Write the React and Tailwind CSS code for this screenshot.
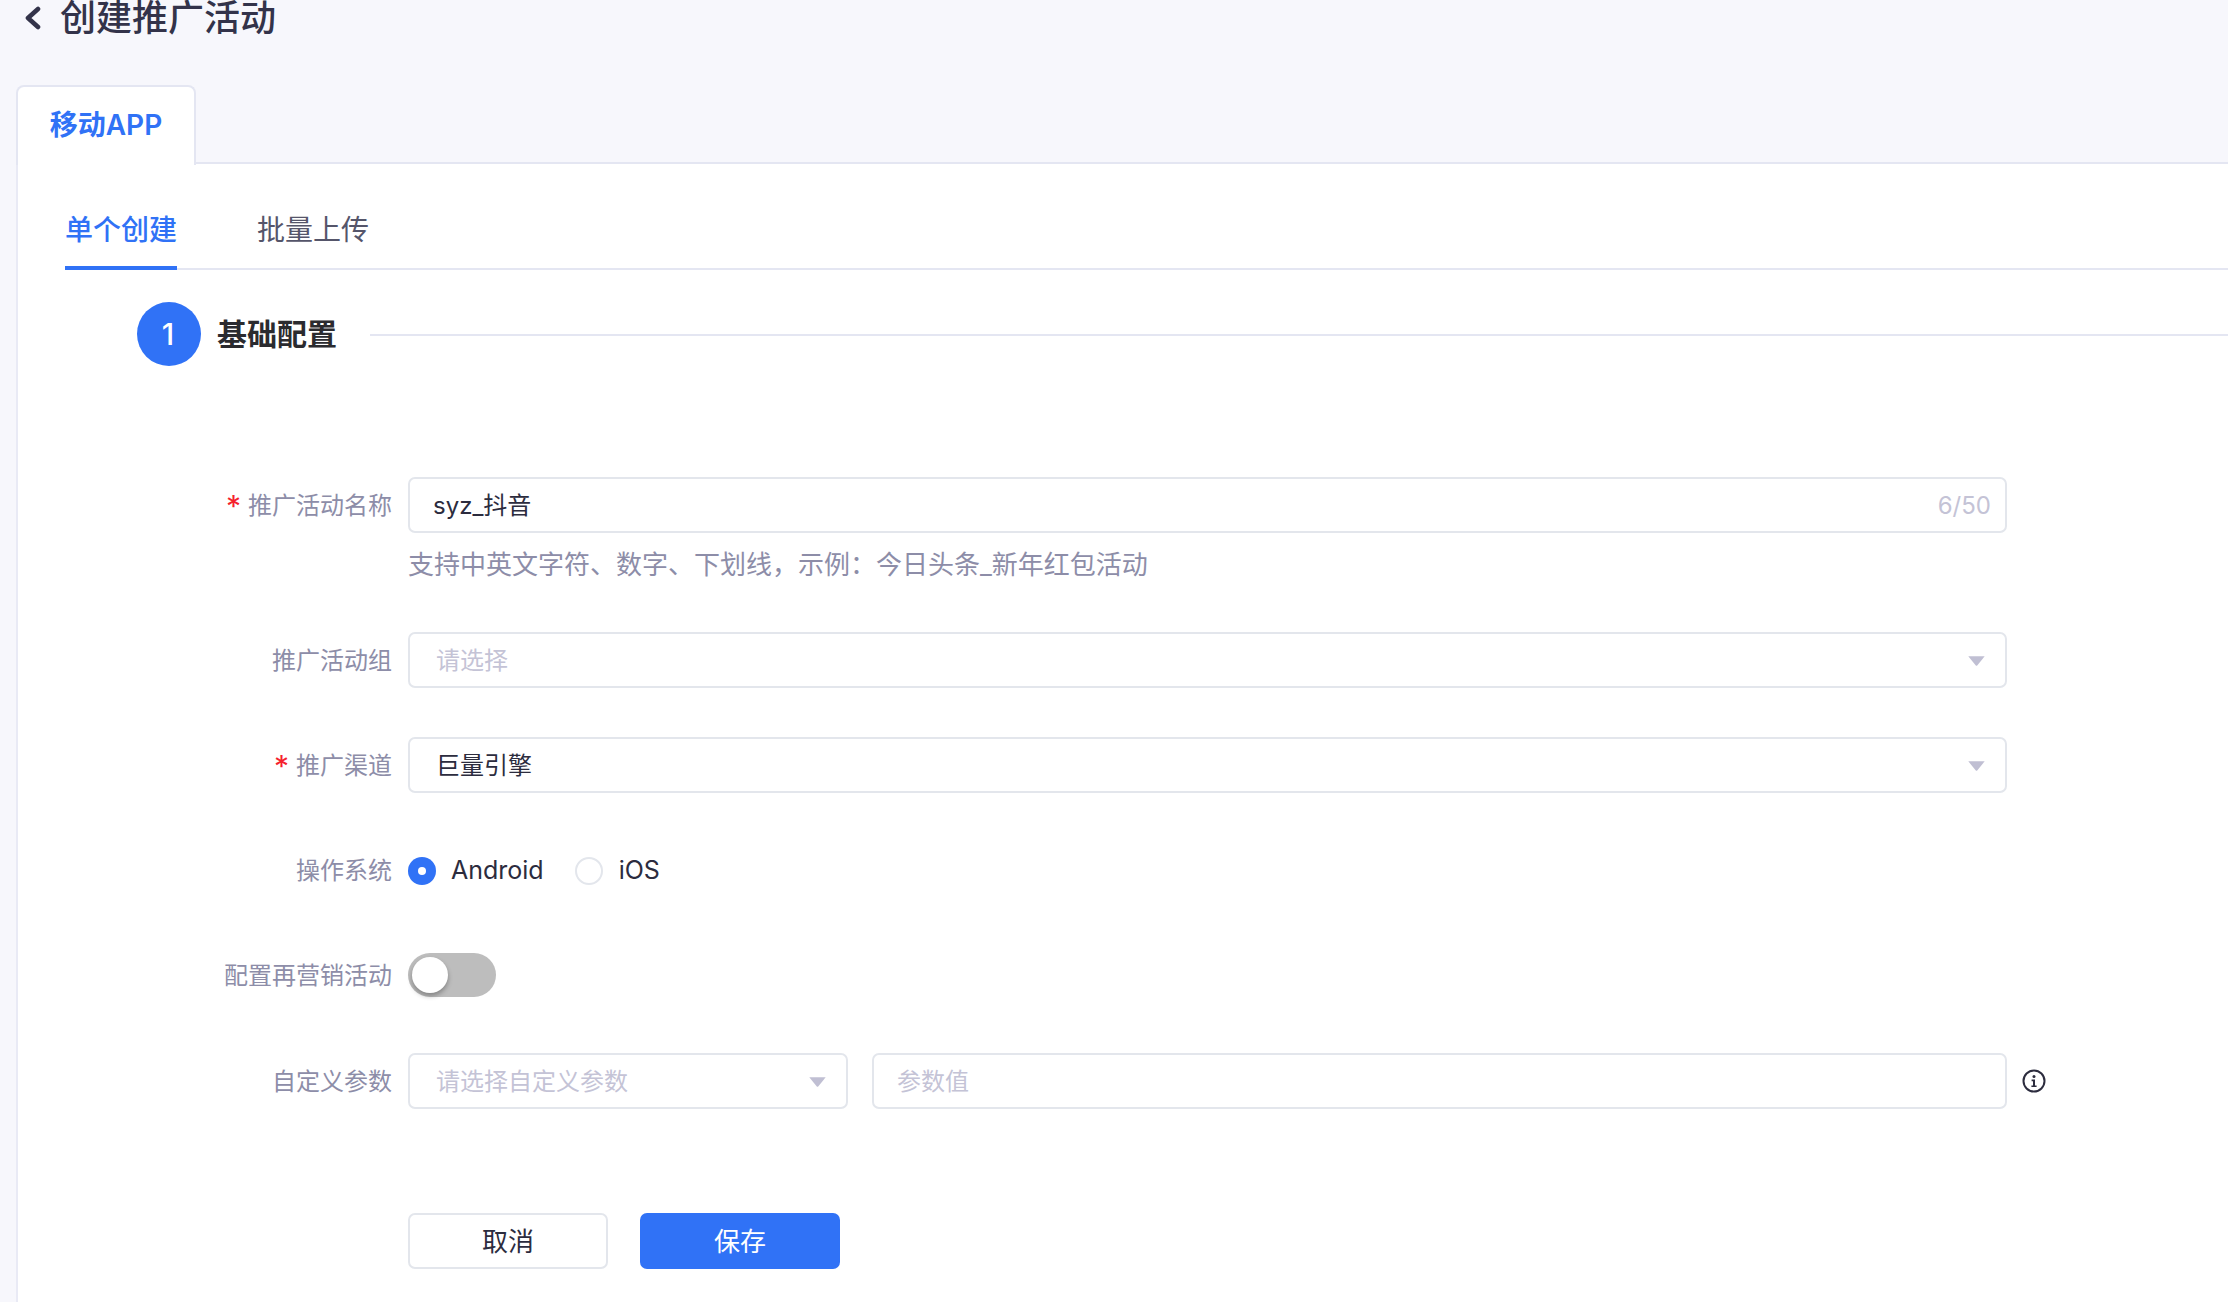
function Caret() {
  return (
    <svg width="17" height="10" viewBox="0 0 17 10" className="shrink-0">
      <path d="M0.3 0.3H16.7L9.2 9.4a1 1 0 0 1-1.4 0Z" fill="#c0bfd3" />
    </svg>
  );
}

function Label({ children, required }) {
  return (
    <div className="w-[358px] shrink-0 flex items-center justify-end text-[24px] leading-[34px] text-[#8d8da8] pt-[2px]">
      {required && <span className="text-[#f5222d] text-[30px] leading-[34px] mr-[7px]">*</span>}
      <span>{children}</span>
    </div>
  );
}

function Box({ className, children }) {
  return (
    <div className={"h-[56px] box-border border-2 border-[#e3e6ec] rounded-[7px] bg-white flex items-center text-[24px] pt-[2px] " + className}>
      {children}
    </div>
  );
}

function Row({ label, required, className, children }) {
  return (
    <div className={"flex items-center gap-[16px] h-[56px] " + (className || "")}>
      <Label required={required}>{label}</Label>
      {children}
    </div>
  );
}

export default function App() {
  return (
    <div className="w-[2228px] h-[1302px] overflow-hidden bg-[#f7f7fc] flex flex-col text-[#2c2c3e] font-['Inter','Noto_Sans_CJK_SC',sans-serif]">
      <div className="h-[84px] shrink-0">
        <div className="h-[36px] flex items-center pl-[24px]">
          <svg width="17" height="24" viewBox="0 0 17 24" fill="none" className="shrink-0">
            <path d="M14 3L4 12L14 21" stroke="#33334a" strokeWidth="4.6" strokeLinecap="round" strokeLinejoin="round" />
          </svg>
          <span className="ml-[19px] text-[36px] leading-[36px] font-medium text-[#33334a]">创建推广活动</span>
        </div>
      </div>

      <div className="h-[80px] shrink-0 flex items-end pl-[16px]">
        <div className="w-[180px] h-[80px] -mb-[1px] box-border border-2 border-b-0 border-[#e4e6f2] rounded-t-[8px] bg-white relative z-10 flex items-center justify-center text-[28px] pb-[2px] font-semibold text-[#3072f6]">
          移动APP
        </div>
        <div className="flex-1 h-[2px] bg-[#e4e6f2]"></div>
      </div>

      <div className="flex-1 ml-[16px] border-l-2 border-[#e9eaf5] bg-white">
        <div className="ml-[47px] h-[106px] box-border pt-[45px] flex border-b-2 border-[#e4e6f2]">
          <div className="w-[112px] h-[61px] box-border border-b-4 border-[#3072f6] text-[28px] leading-[42px] text-[#3072f6] font-medium text-center">
            单个创建
          </div>
          <div className="ml-[80px] text-[28px] leading-[42px] text-[#55556a]">批量上传</div>
        </div>

        <div className="mt-[32px] ml-[119px] flex items-center h-[64px]">
          <div className="w-[64px] h-[64px] rounded-full bg-[#3072f6] text-white text-[30px] font-medium flex items-center justify-center pr-[2px]">1</div>
          <div className="ml-[16px] text-[30px] font-semibold text-[#2b2b2f]">基础配置</div>
          <div className="ml-[33px] flex-1 h-[2px] bg-[#e4e6f2] relative top-[1px]"></div>
        </div>

        <div className="mt-[111px] ml-[16px]">
          <Row label="推广活动名称" required>
            <Box className="w-[1599px] pl-[23px] pr-[14px] justify-between">
              <span>syz_抖音</span>
              <span className="text-[#c4c3d6]">6/50</span>
            </Box>
          </Row>
          <div className="pl-[374px] mt-[15px] text-[26px] leading-[34px] text-[#8d8da8]">
            支持中英文字符、数字、下划线，示例：今日头条_新年红包活动
          </div>
          <Row label="推广活动组" className="mt-[50px]">
            <Box className="w-[1599px] pl-[26px] pr-[20px] justify-between">
              <span className="text-[#c4c3d6]">请选择</span>
              <Caret />
            </Box>
          </Row>
          <Row label="推广渠道" required className="mt-[49px]">
            <Box className="w-[1599px] pl-[26px] pr-[20px] justify-between">
              <span>巨量引擎</span>
              <Caret />
            </Box>
          </Row>
          <Row label="操作系统" className="mt-[49px]">
            <div className="flex items-center text-[25px] pt-[1px]">
              <div className="w-[28px] h-[28px] rounded-full bg-[#3072f6] flex items-center justify-center">
                <div className="w-[8px] h-[8px] rounded-full bg-white"></div>
              </div>
              <span className="ml-[15px]">Android</span>
              <div className="ml-[31px] w-[28px] h-[28px] box-border rounded-full border-2 border-[#e3e6ec] bg-white"></div>
              <span className="ml-[16px]">iOS</span>
            </div>
          </Row>
          <Row label="配置再营销活动" className="mt-[49px]">
            <div className="w-[88px] h-[44px] rounded-full bg-[#bdbdbd] flex items-center pl-[4px]">
              <div className="w-[36px] h-[36px] rounded-full bg-white shadow-[0_3px_5px_rgba(0,0,0,0.3)]"></div>
            </div>
          </Row>
          <Row label="自定义参数" className="mt-[50px]">
            <Box className="w-[440px] pl-[26px] pr-[20px] justify-between">
              <span className="text-[#c4c3d6]">请选择自定义参数</span>
              <Caret />
            </Box>
            <Box className="ml-[8px] w-[1135px] pl-[23px]">
              <span className="text-[#c4c3d6]">参数值</span>
            </Box>
            <svg width="24" height="24" viewBox="0 0 24 24" fill="none" className="shrink-0 -ml-[1px]">
              <circle cx="12" cy="12" r="10.5" stroke="#2c2c3e" strokeWidth="2" />
              <circle cx="12" cy="7.4" r="1.5" fill="#2c2c3e" />
              <path d="M9.6 10.6H13V16.4H14.6V18H9.4V16.4H11V12.2H9.6Z" fill="#2c2c3e" />
            </svg>
          </Row>
          <div className="mt-[104px] pl-[374px] flex gap-[32px]">
            <button className="w-[200px] h-[56px] box-border border-2 border-[#e3e6ec] rounded-[7px] bg-white text-[26px] text-[#2c2c3e]">取消</button>
            <button className="w-[200px] h-[56px] rounded-[7px] bg-[#3072f6] text-[26px] text-white">保存</button>
          </div>
        </div>
      </div>
    </div>
  );
}
